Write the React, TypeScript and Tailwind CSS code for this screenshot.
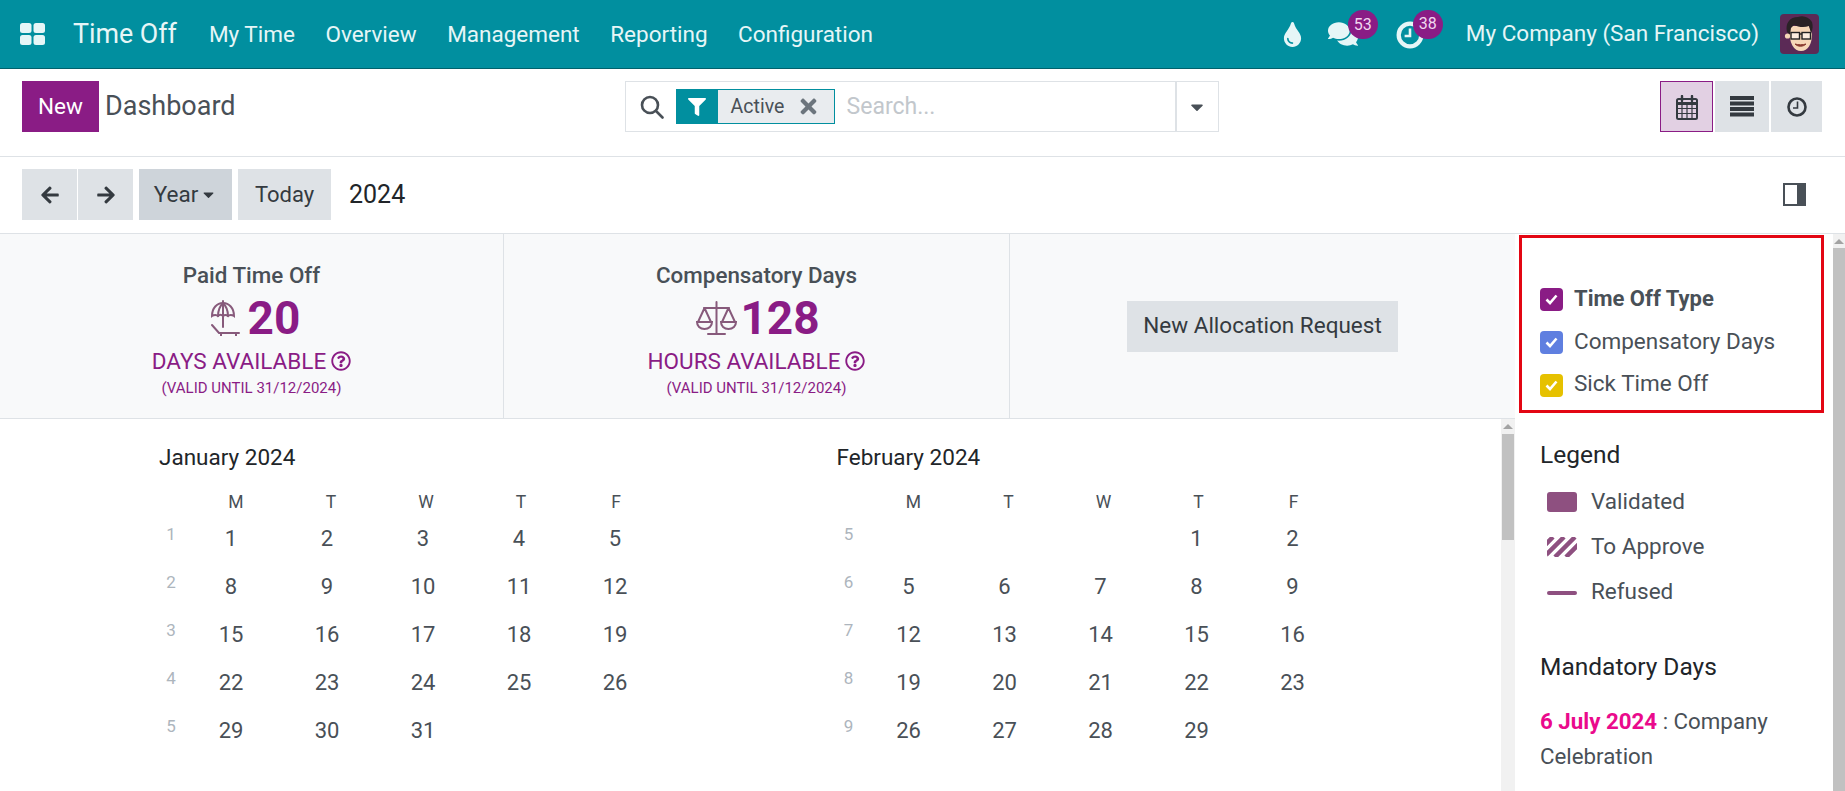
import { ReactNode } from 'react'
import {
  FaArrowLeft,
  FaArrowRight,
  FaCaretDown,
  FaComments,
  FaFilter,
  FaRegQuestionCircle,
  FaTimes,
  FaTint
} from 'react-icons/fa'

const MENU = ['My Time', 'Overview', 'Management', 'Reporting', 'Configuration']

function AppsIcon() {
  return (
    <svg width="25" height="22" viewBox="0 0 25 22" className="fill-[#e6f6f7]">
      <rect x="0" y="0" width="11.5" height="10" rx="2.5" />
      <rect x="13.5" y="0" width="11.5" height="10" rx="2.5" />
      <rect x="0" y="12" width="11.5" height="10" rx="2.5" />
      <rect x="13.5" y="12" width="11.5" height="10" rx="2.5" />
    </svg>
  )
}

function ActivityClock() {
  return (
    <svg width="28" height="28" viewBox="0 0 26 26" fill="none" stroke="#e6f6f7">
      <circle cx="13" cy="13" r="10.5" strokeWidth="4" />
      <path d="M13 7v7H8" strokeWidth="2.4" />
    </svg>
  )
}

function Avatar() {
  return (
    <svg width="39" height="40" viewBox="0 0 39 40">
      <rect width="39" height="40" rx="4" fill="#5b2a56" />
      <path d="M9 14c0 16 5 23 12 23s11-7 11-17l-3-8H12z" fill="#f6d7b8" />
      <path d="M7 18c-2-9 3-15 11-15 5-2 11 0 14 5 1 4 1 7-1 11l-2-7c-5 2-11 1-15-1l-3 3-1 7z" fill="#2a2226" />
      <circle cx="7.5" cy="22" r="2.6" fill="#f6d7b8" />
      <rect x="11" y="18.5" width="8.5" height="6.5" fill="#fff" fillOpacity=".55" stroke="#222" strokeWidth="1.4" />
      <rect x="22" y="18.5" width="8.5" height="6.5" fill="#fff" fillOpacity=".55" stroke="#222" strokeWidth="1.4" />
      <path d="M19.5 20h2.5" stroke="#222" strokeWidth="1.4" />
      <path d="M15 30c3 3 8 3 11 0-3 1-8 1-11 0z" fill="#8a3b30" stroke="#8a3b30" strokeWidth="1" />
    </svg>
  )
}

function SearchIcon() {
  return (
    <svg width="24" height="24" viewBox="0 0 24 24" fill="none" stroke="#495057" strokeWidth="2.6" strokeLinecap="round" className="ml-[14px]">
      <circle cx="10" cy="10" r="8" />
      <path d="M16 16l6.500 6.500" />
    </svg>
  )
}

function CalendarIcon() {
  return (
    <svg width="22" height="25" viewBox="0 0 22 25" fill="none" stroke="#343a40" className="mt-[1px]">
      <rect x="1" y="4" width="20" height="20" rx="1.500" strokeWidth="2" />
      <path d="M1 8.500h20" strokeWidth="3" />
      <path d="M1 13.500h20M1 18.500h20M6 9v15M11 9v15M16 9v15" strokeWidth="1.200" />
      <path d="M6 1v5M16 1v5" strokeWidth="2.400" strokeLinecap="round" />
    </svg>
  )
}

function ListIcon() {
  return (
    <svg width="24" height="21" viewBox="0 0 24 21" fill="#343a40">
      <rect width="24" height="4" y="0" />
      <rect width="24" height="4" y="5.500" />
      <rect width="24" height="4" y="11" />
      <rect width="24" height="4" y="16.500" />
    </svg>
  )
}

function ClockIcon() {
  return (
    <svg width="20" height="20" viewBox="0 0 20 20" fill="none" stroke="#343a40">
      <circle cx="10" cy="10" r="8.500" strokeWidth="2.600" />
      <path d="M10.500 4.500v6.500H6" strokeWidth="1.600" />
    </svg>
  )
}

function UmbrellaIcon() {
  return (
    <svg width="30" height="36" viewBox="0 0 30 36" fill="none" stroke="#875a7b" strokeWidth="2" strokeLinecap="round" className="mr-[4px] ml-[8px]">
      <path d="M12 1v26" />
      <path d="M1 16C1 8 6 3 12 3s11 5 11 13c-2-1.500-5-1.500-6 0-1.500-1.500-3.500-1.500-5 0-1.500-1.500-3.500-1.500-5 0-1-1.500-4-1.500-6 0z" />
      <path d="M12 3c-3 3-5 8-5 13M12 3c3 3 5 8 5 13" />
      <path d="M1 25l7 8h20M10 33v3M25 33v3" />
    </svg>
  )
}

function ScaleIcon() {
  return (
    <svg width="41" height="35" viewBox="0 0 41 35" fill="none" stroke="#875a7b" strokeWidth="2" strokeLinecap="round" className="ml-[3px]">
      <path d="M20.500 1v31M12 33h17M8 7h25" />
      <path d="M8.500 7L2 21M8.500 7L15 21M32.500 7L26 21M32.500 7L39 21" />
      <path d="M1 21h15c0 4-3 7-7.500 7S1 25 1 21zM25 21h15c0 4-3 7-7.500 7S25 25 25 21z" />
    </svg>
  )
}

function Btn({ className, children }: { className: string; children: ReactNode }) {
  return (
    <div className={`flex h-[51px] items-center justify-center bg-[#dee2e6] text-[#343a40] ${className}`}>
      {children}
    </div>
  )
}

function Stat({
  title,
  icon,
  value,
  label
}: {
  title: string
  icon: ReactNode
  value: string
  label: string
}) {
  return (
    <div className="flex flex-col items-center border-r border-[#dee2e6] pt-[27px]">
      <div className="text-[22.400px] leading-[28px] font-medium text-[#495057]">{title}</div>
      <div className="mt-[6px] flex h-[46px] items-center gap-[3px]">
        {icon}
        <span className="text-[46px] leading-[46px] font-bold text-[#8a1c85]">{value}</span>
      </div>
      <div className="mt-[6px] flex items-center gap-[5px] text-[22.500px] leading-[28px] text-[#8a1c85]">
        {label}
        <FaRegQuestionCircle className="text-[20px]" />
      </div>
      <div className="mt-[3px] text-[15px] leading-[20px] text-[#8a1c85]">(VALID UNTIL 31/12/2024)</div>
    </div>
  )
}

function Month({
  title,
  weeks
}: {
  title: string
  weeks: { no: number; days: (number | null)[] }[]
}) {
  return (
    <div className="shrink-0 pt-[24px]">
      <div className="text-[22.500px] leading-[28px] text-[#212529]">{title}</div>
      <div className="mt-[19px] mb-[1px] ml-[29.500px] grid grid-cols-[repeat(5,95px)] text-center text-[17.500px] leading-[24px] text-[#495057]">
        {['M', 'T', 'W', 'T', 'F'].map((d, i) => (
          <div key={i}>{d}</div>
        ))}
      </div>
      {weeks.map((w) => (
        <div key={w.no} className="grid h-[48px] grid-cols-[24px_repeat(5,96px)] items-center text-center">
          <div className="pb-[10px] text-[17px] leading-[24px] text-[#adb5bd]">{w.no}</div>
          {w.days.map((d, i) => (
            <div key={i} className="text-[22px] leading-[28px] text-[#495057]">
              {d}
            </div>
          ))}
        </div>
      ))}
    </div>
  )
}

function Check({ color }: { color: string }) {
  return (
    <div className={`flex h-[23px] w-[23px] items-center justify-center rounded-[4px] ${color}`}>
      <svg width="13" height="11" viewBox="0 0 13 11" fill="none" stroke="#fff" strokeWidth="2.600">
        <path d="M1.500 5.500l3.500 3.500 6.500-7.500" />
      </svg>
    </div>
  )
}

function ScrollBar({ className, thumb }: { className: string; thumb: string }) {
  return (
    <div className={`flex shrink-0 flex-col items-center bg-[#f1f1f1] ${className}`}>
      <div className="mt-[5px] h-0 w-0 border-x-[5px] border-b-[5px] border-x-transparent border-b-[#a3a3a3]" />
      <div className={`w-[12px] bg-[#c1c1c1] ${thumb}`} />
    </div>
  )
}

export default function App() {
  return (
    <div className="flex h-[791px] w-[1845px] flex-col overflow-hidden bg-white font-['Roboto',sans-serif]">
      <header className="flex h-[69px] shrink-0 items-center border-b border-[#01616c] bg-[#018f9f] text-[#e6f6f7]">
        <div className="ml-[20px]">
          <AppsIcon />
        </div>
        <div className="ml-[28px] text-[26.800px]">Time Off</div>
        <nav className="ml-[32px] flex gap-[30.500px] pt-[2px] text-[22.500px]">
          {MENU.map((m) => (
            <span key={m}>{m}</span>
          ))}
        </nav>
        <div className="ml-auto flex items-center">
          <FaTint className="text-[25px]" />
          <div className="relative ml-[23px]">
            <FaComments className="text-[30px]" />
            <span className="absolute top-[-9px] left-[20px] flex h-[29px] w-[30px] items-center justify-center rounded-full bg-[#8a1c85] text-[16px] text-[#f0d8ef]">
              53
            </span>
          </div>
          <div className="relative ml-[38px] mt-[1px]">
            <ActivityClock />
            <span className="absolute top-[-11px] left-[17px] flex h-[29px] w-[30px] items-center justify-center rounded-full bg-[#8a1c85] text-[16px] text-[#f0d8ef]">
              38
            </span>
          </div>
          <span className="ml-[42px] text-[22.500px]">My Company (San Francisco)</span>
          <div className="mr-[26px] ml-[21px]">
            <Avatar />
          </div>
        </div>
      </header>

      <div className="flex h-[88px] shrink-0 items-start border-b border-[#dee2e6] pt-[12px]">
        <div className="ml-[22px] flex h-[51px] w-[77px] items-center justify-center bg-[#8a1c85] pt-[1px] text-[22.500px] text-white">
          New
        </div>
        <div className="ml-[6px] flex h-[51px] items-center text-[27px] text-[#495057]">Dashboard</div>
        <div className="ml-[389px] flex h-[51px] w-[594px] items-center border border-[#dee2e6]">
          <SearchIcon />
          <div className="ml-[12px] flex h-[35px] items-stretch border border-[#018f9f] bg-[#e9ecef]">
            <div className="flex w-[41px] items-center justify-center bg-[#018f9f] text-white">
              <FaFilter className="text-[18px]" />
            </div>
            <div className="flex w-[116px] items-center pl-[13px] text-[19.500px] text-[#495057]">
              Active
              <FaTimes className="ml-[13px] text-[23px] text-[#6c757d]" />
            </div>
          </div>
          <span className="ml-[12px] flex-1 pt-[2px] text-[23px] text-[#c2c7cc]">Search...</span>
          <div className="flex h-full w-[43px] items-center justify-center border-l-2 border-[#dee2e6]">
            <FaCaretDown className="text-[20px] text-[#495057]" />
          </div>
        </div>
        <div className="ml-auto mr-[23px] flex gap-[2px]">
          <div className="flex h-[51px] w-[53px] items-center justify-center border border-[#8a1c85] bg-[#e2d0e3]">
            <CalendarIcon />
          </div>
          <Btn className="w-[54px]">
            <ListIcon />
          </Btn>
          <Btn className="w-[51px]">
            <ClockIcon />
          </Btn>
        </div>
      </div>

      <div className="flex h-[76px] shrink-0 items-center pb-[1px]">
        <Btn className="ml-[22px] w-[55px]">
          <FaArrowLeft className="text-[20px]" />
        </Btn>
        <Btn className="ml-[1px] w-[55px]">
          <FaArrowRight className="text-[20px]" />
        </Btn>
        <div className="ml-[6px] flex h-[51px] w-[93px] items-center justify-center gap-[2px] bg-[#ced4da] text-[22.500px] text-[#343a40]">
          Year
          <FaCaretDown className="text-[17px]" />
        </div>
        <Btn className="ml-[6px] w-[93px] text-[22px]">Today</Btn>
        <span className="ml-[18px] text-[25px] text-[#212529]">2024</span>
        <div className="mr-[39px] ml-auto flex h-[23px] w-[23px] border-2 border-[#495057]">
          <div className="flex-1 bg-white" />
          <div className="w-[7px] bg-[#495057]" />
        </div>
      </div>

      <div className="flex min-h-0 flex-1 border-t border-[#dee2e6]">
        <div className="flex w-[1515px] shrink-0 flex-col">
          <div className="grid h-[185px] shrink-0 grid-cols-[504px_506px_505px] border-b border-[#dee2e6] bg-[#f8f9fa]">
            <Stat title="Paid Time Off" icon={<UmbrellaIcon />} value="20" label="DAYS AVAILABLE" />
            <Stat title="Compensatory Days" icon={<ScaleIcon />} value="128" label="HOURS AVAILABLE" />
            <div className="flex items-center justify-center">
              <Btn className="w-[271px] text-[22.500px]">New Allocation Request</Btn>
            </div>
          </div>
          <div className="flex min-h-0 flex-1">
            <div className="flex min-w-0 flex-1 gap-[173px] pl-[159px]">
              <Month
                title="January 2024"
                weeks={[
                  { no: 1, days: [1, 2, 3, 4, 5] },
                  { no: 2, days: [8, 9, 10, 11, 12] },
                  { no: 3, days: [15, 16, 17, 18, 19] },
                  { no: 4, days: [22, 23, 24, 25, 26] },
                  { no: 5, days: [29, 30, 31, null, null] }
                ]}
              />
              <Month
                title="February 2024"
                weeks={[
                  { no: 5, days: [null, null, null, 1, 2] },
                  { no: 6, days: [5, 6, 7, 8, 9] },
                  { no: 7, days: [12, 13, 14, 15, 16] },
                  { no: 8, days: [19, 20, 21, 22, 23] },
                  { no: 9, days: [26, 27, 28, 29, null] }
                ]}
              />
            </div>
            <ScrollBar className="w-[14px]" thumb="mt-[5px] h-[106px]" />
          </div>
        </div>

        <aside className="min-w-0 flex-1 text-[22.500px] text-[#495057]">
          <div className="mx-[4px] mt-[1px] flex h-[178px] w-[305px] flex-col gap-[20px] border-[3px] border-[#e30613] pt-[50px] pl-[18px]">
            <div className="flex h-[23px] items-center gap-[11px] text-[22px] font-bold">
              <Check color="bg-[#8a1c85]" />
              <span className="pb-[2px]">Time Off Type</span>
            </div>
            <div className="flex h-[23px] items-center gap-[11px]">
              <Check color="bg-[#5f7fe0]" />
              <span className="pb-[2px]">Compensatory Days</span>
            </div>
            <div className="flex h-[23px] items-center gap-[11px]">
              <Check color="bg-[#e6c100]" />
              <span className="pb-[3px]">Sick Time Off</span>
            </div>
          </div>

          <div className="pl-[25px]">
            <div className="mt-[27px] text-[24.500px] leading-[30px] text-[#212529]">Legend</div>
            <div className="mt-[9px] flex h-[45px] items-center gap-[14px] pl-[7px]">
              <div className="h-[20px] w-[30px] rounded-[3px] bg-[#8e5080]" />
              Validated
            </div>
            <div className="flex h-[45px] items-center gap-[14px] pl-[7px]">
              <svg width="30" height="20" viewBox="0 0 30 20">
                <defs>
                  <clipPath id="swatch">
                    <rect width="30" height="20" rx="2" />
                  </clipPath>
                </defs>
                <g clipPath="url(#swatch)" stroke="#8e5080" strokeWidth="4.500">
                  <path d="M-14 20L6 0M-3 20L17 0M8 20L28 0M19 20L39 0" />
                </g>
              </svg>
              To Approve
            </div>
            <div className="flex h-[45px] items-center gap-[14px] pl-[7px]">
              <div className="mt-[3px] h-[4px] w-[30px] rounded-[2px] bg-[#8e5080]" />
              Refused
            </div>
            <div className="mt-[38px] text-[24.500px] leading-[30px] text-[#212529]">Mandatory Days</div>
            <div className="mt-[22px] text-[22.300px] leading-[35px]">
              <div>
                <span className="font-bold text-[#ea0a8c]">6 July 2024</span> : Company
              </div>
              <div>Celebration</div>
            </div>
          </div>
        </aside>

        <ScrollBar className="w-[13px] border-l border-white" thumb="mt-[4px] flex-1" />
      </div>
    </div>
  )
}
